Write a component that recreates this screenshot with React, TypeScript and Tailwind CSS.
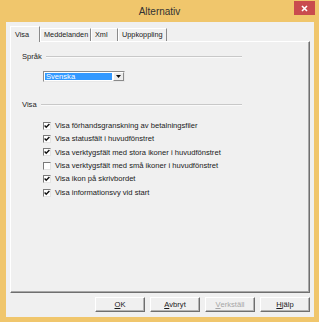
const font = { fontFamily: '"Liberation Sans", Arial, sans-serif' };

const options = [
  { label: 'Visa förhandsgranskning av betalningsfiler', checked: true },
  { label: 'Visa statusfält i huvudfönstret', checked: true },
  { label: 'Visa verktygsfält med stora ikoner i huvudfönstret', checked: true },
  { label: 'Visa verktygsfält med små ikoner i huvudfönstret', checked: false },
  { label: 'Visa ikon på skrivbordet', checked: true },
  { label: 'Visa informationsvy vid start', checked: true },
];

const Check = ({ checked }: { checked: boolean }) => (
  <div className="w-[8px] h-[8px] bg-white border border-t-[#7a7a7a] border-l-[#7a7a7a] border-r-[#e3e3e3] border-b-[#e3e3e3] flex items-center justify-center shrink-0">
    {checked && (
      <svg width="6" height="6" viewBox="0 0 6 6">
        <path d="M0.6 2.6 L2.2 4.3 L5.4 0.9" stroke="#111" strokeWidth="1.4" fill="none" />
      </svg>
    )}
  </div>
);

const GroupLabel = ({ text }: { text: string }) => (
  <div className="flex items-center w-[220px] h-[10px]">
    <span className="text-[7.6px] leading-none text-[#222]">{text}</span>
    <div className="flex-1 ml-[4px] h-[2px] border-t border-t-[#c8c8c8] border-b border-b-[#fafafa]" />
  </div>
);

const Button = ({ children, disabled }: { children: React.ReactNode; disabled?: boolean }) => (
  <div className="w-[50px] h-[15px] border border-t-white border-l-white border-r-[#6f6f6f] border-b-[#6f6f6f] bg-[#f0f0f0] shadow-[inset_-1px_-1px_0_#b4b4b4]">
    <div
      className={`h-full flex items-center justify-center text-[7.6px] leading-none ${disabled ? 'text-[#a6a6a6]' : 'text-[#1a1a1a]'}`}
    >
      {children}
    </div>
  </div>
);

const tabs = ['Meddelanden', 'Xml', 'Uppkoppling'];

export default function App() {
  return (
    <div className="w-[319px] h-[322px] bg-[#f0c66c] flex flex-col" style={font}>
      {/* title bar */}
      <div className="relative h-[22px] shrink-0 flex justify-center pt-[7px]">
        <span className="text-[10px] leading-none text-[#333]">Alternativ</span>
        <div className="absolute right-[4px] top-[1px] w-[21px] h-[14px] bg-[#c94b4e] flex items-center justify-center">
          <svg width="7" height="7" viewBox="0 0 7 7">
            <path d="M1 1 L6 6 M6 1 L1 6" stroke="#fff" strokeWidth="1.6" />
          </svg>
        </div>
      </div>

      {/* client */}
      <div className="flex-1 ml-[6px] mr-[5px] mb-[5px] bg-[#f0f0f0] flex flex-col px-[4px] pt-[4px]">
        {/* tabs */}
        <div className="flex items-end h-[15px] shrink-0">
          <div className="relative z-10 h-[16px] -mb-[1px] w-[30px] bg-[#f0f0f0] border-t border-l border-t-white border-l-white border-r border-r-[#8a8a8a] pl-[4px] flex items-center text-[7.3px] leading-none text-[#1a1a1a]">
            Visa
          </div>
          {tabs.map((t, i) => (
            <div
              key={t}
              className={`h-[13px] border-t border-t-white border-l border-l-white border-r border-r-[#8a8a8a] flex items-center text-[7.3px] leading-none text-[#1a1a1a] pl-[3px] whitespace-nowrap overflow-hidden ${
                i === 0 ? 'w-[51px]' : i === 1 ? 'w-[27px]' : 'w-[49px]'
              }`}
            >
              {t}
            </div>
          ))}
        </div>

        {/* panel */}
        <div className="h-[252px] shrink-0 border-t border-l border-t-white border-l-white border-r border-b border-r-[#6f6f6f] border-b-[#6f6f6f] shadow-[inset_-1px_-1px_0_#a8a8a8] pl-[11px] pt-[10px] flex flex-col">
          <GroupLabel text="Språk" />
          <div className="ml-[21px] mt-[9px] w-[82px] h-[11px] flex border border-t-[#8c8c8c] border-l-[#8c8c8c] border-r-[#e8e8e8] border-b-[#e8e8e8] bg-white">
            <div className="flex-1 m-[1px] bg-[#3399ff] flex items-center pl-[1px] text-[7.6px] leading-none text-white">
              Svenska
            </div>
            <div className="w-[11px] bg-[#ececec] border border-t-white border-l-white border-r-[#8a8a8a] border-b-[#8a8a8a] flex items-center justify-center">
              <svg width="5" height="3" viewBox="0 0 5 3">
                <path d="M0 0 H5 L2.5 3 Z" fill="#111" />
              </svg>
            </div>
          </div>

          <div className="mt-[18px]">
            <GroupLabel text="Visa" />
          </div>

          <div className="ml-[21px] mt-[9px] flex flex-col">
            {options.map((o) => (
              <div key={o.label} className="h-[13.4px] flex items-center gap-[4px]">
                <Check checked={o.checked} />
                <span className="text-[7.6px] leading-none text-[#1a1a1a] whitespace-nowrap">{o.label}</span>
              </div>
            ))}
          </div>
        </div>

        {/* buttons */}
        <div className="flex justify-end gap-[5px] mt-[4px]">
          <Button>
            <span className="underline">O</span>K
          </Button>
          <Button>
            <span className="underline">A</span>vbryt
          </Button>
          <Button disabled>
            <span className="underline">V</span>erkställ
          </Button>
          <Button>
            <span className="underline">H</span>jälp
          </Button>
        </div>
      </div>
    </div>
  );
}
